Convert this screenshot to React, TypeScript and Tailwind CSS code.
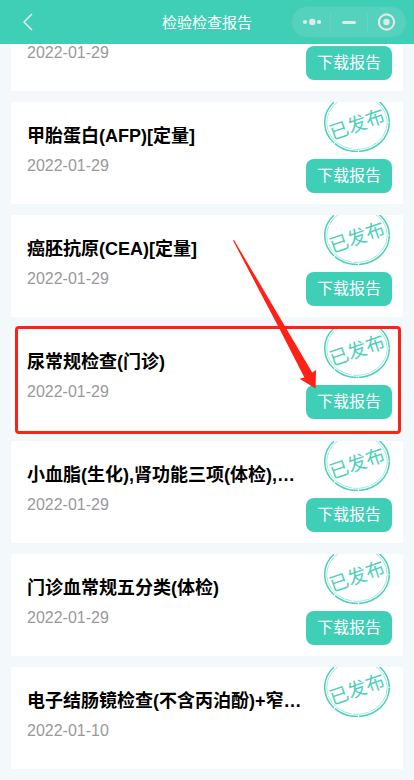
type Report = {
  title?: string;
  date: string;
  published: boolean;
  downloadable: boolean;
  highlighted?: boolean;
};

const reports: Report[] = [
  { date: "2022-01-29", published: false, downloadable: true },
  { title: "甲胎蛋白(AFP)[定量]", date: "2022-01-29", published: true, downloadable: true },
  { title: "癌胚抗原(CEA)[定量]", date: "2022-01-29", published: true, downloadable: true },
  { title: "尿常规检查(门诊)", date: "2022-01-29", published: true, downloadable: true, highlighted: true },
  { title: "小血脂(生化),肾功能三项(体检),…", date: "2022-01-29", published: true, downloadable: true },
  { title: "门诊血常规五分类(体检)", date: "2022-01-29", published: true, downloadable: true },
  { title: "电子结肠镜检查(不含丙泊酚)+窄…", date: "2022-01-10", published: true, downloadable: false },
];

function Header() {
  return (
    <header className="sticky top-0 z-10 grid h-11 grid-cols-[1fr_auto_1fr] items-center bg-[#3fceb6] text-white">
      <button type="button" aria-label="返回" className="ml-5 w-4">
        <svg viewBox="0 0 16 20" className="h-5 w-4" fill="none" stroke="#e4eeec" strokeWidth="1.5">
          <path d="M12 2 L4 10 L12 18" />
        </svg>
      </button>
      <h1 className="pt-px text-[15px] leading-6">检验检查报告</h1>
      <div className="mr-[7px] flex h-8 w-[116px] items-center justify-self-end rounded-full border border-[#4bcdb8] bg-[#54d2bd]">
        <button type="button" aria-label="更多" className="flex flex-1 justify-center">
          <svg viewBox="0 0 20 8" className="h-2 w-5" fill="#e4e8e7">
            <circle cx="4" cy="4" r="2.1" />
            <circle cx="11.3" cy="4" r="3.2" />
            <circle cx="18" cy="4" r="2.1" />
          </svg>
        </button>
        <span className="h-[18px] w-px bg-[#65d4c2]" />
        <button type="button" aria-label="最小化" className="flex w-9 justify-center">
          <span className="h-[3px] w-[14px] rounded-full bg-[#e4e8e7]" />
        </button>
        <span className="h-[18px] w-px bg-[#65d4c2]" />
        <button type="button" aria-label="关闭" className="flex flex-1 justify-center">
          <svg viewBox="0 0 18 18" className="h-[18px] w-[18px]">
            <circle cx="8.5" cy="9" r="7.6" fill="none" stroke="#e4e8e7" strokeWidth="2.1" />
            <circle cx="8.5" cy="9" r="3.2" fill="#e4e8e7" />
          </svg>
        </button>
      </div>
    </header>
  );
}

// published stamp, its top is cut off by the card edge
function Stamp() {
  return (
    <svg viewBox="0 0 66 50" className="absolute top-0 right-[13px] h-[50px] w-[66px]" fill="none" stroke="#4fd0bb">
      <ellipse cx="33" cy="20.5" rx="32.3" ry="29" strokeWidth="1.5" strokeDasharray="46 1 25 1" />
      <ellipse cx="33" cy="20.5" rx="30.2" ry="26.9" strokeWidth="1" strokeOpacity="0.5" strokeDasharray="31 1 17 1" />
      <text
        x="33"
        y="29"
        textAnchor="middle"
        transform="rotate(-19 33 22)"
        fontSize="19"
        fill="#4fd0bb"
        stroke="none"
      >
        已发布
      </text>
    </svg>
  );
}

// red frame and arrow that point at the download button
function Callout() {
  return (
    <div className="pointer-events-none absolute -top-[2px] right-[2px] -bottom-1 left-1 rounded-sm border-3 border-[#ff2115]">
      <svg viewBox="0 0 84 150" className="absolute right-[82px] -top-[90px] h-[150px] w-[84px]" fill="#ff2115">
        <path d="M1 1.5 L2 1 L52.8 87 L80.2 133.5 L84 131 L83.6 149.5 L67.5 139.8 L72.4 138.6 L46 87 Z" />
      </svg>
    </div>
  );
}

function ReportCard({ report }: { report: Report }) {
  return (
    <li className="relative">
      <article className="relative flex h-[102px] overflow-hidden rounded-xs bg-white pr-[11px] pl-4">
        <div className="min-w-0 flex-1 pt-5">
          <h2 className="h-7 truncate text-lg leading-7 font-bold text-black">{report.title}</h2>
          <time dateTime={report.date} className="mt-1 block text-base leading-6 text-[#999999]">
            {report.date}
          </time>
        </div>
        {report.published && <Stamp />}
        <div className="w-[86px] shrink-0 pt-[57px]">
          {report.downloadable && (
            <button type="button" className="h-[34px] w-full rounded-lg bg-[#3fceb6] text-base leading-6 text-white">
              下载报告
            </button>
          )}
        </div>
      </article>
      {report.highlighted && <Callout />}
    </li>
  );
}

export default function App() {
  return (
    <div className="min-h-screen overflow-clip bg-[#f3f9fa] font-['Liberation_Sans','Noto_Sans_CJK_SC',sans-serif]">
      <Header />
      <main className="-mt-[55px] px-[11px] pb-[11px]">
        <ul className="flex flex-col gap-[11px]">
          {reports.map((report, i) => (
            <ReportCard key={i} report={report} />
          ))}
        </ul>
      </main>
    </div>
  );
}
